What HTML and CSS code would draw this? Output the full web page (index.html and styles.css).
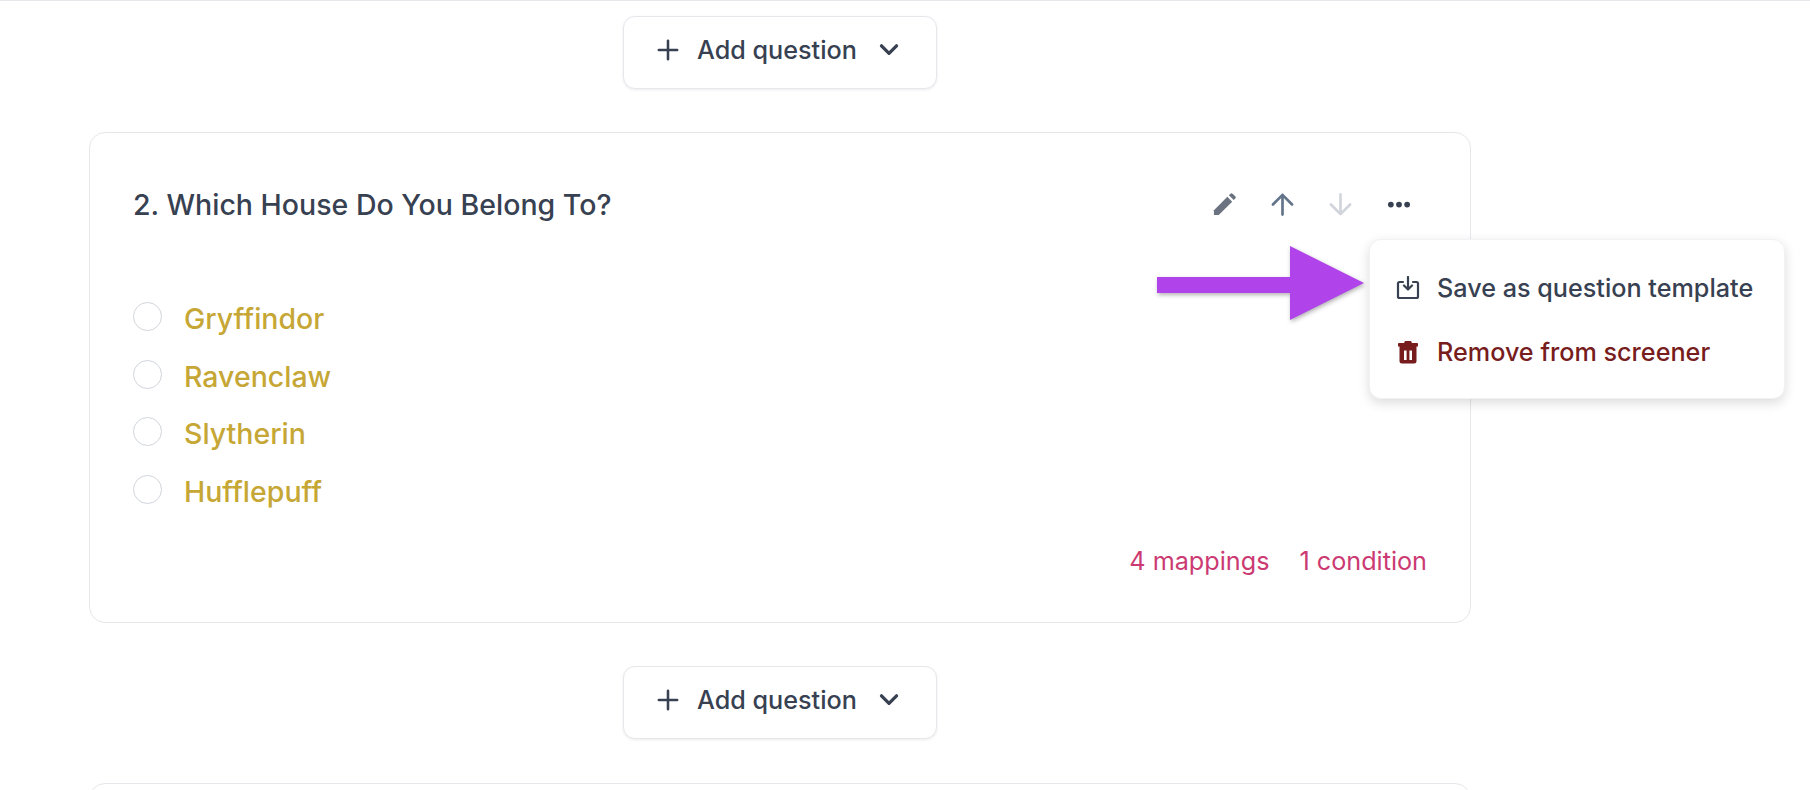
FILE: index.html
```html
<!DOCTYPE html>
<html lang="en">
<head>
  <meta charset="UTF-8" />
  <meta name="viewport" content="width=device-width, initial-scale=1.0" />
  <title>Screener questions</title>
  <link rel="stylesheet" href="styles.css">
</head>
<body>
  <main class="screener">
    <!-- Add question -->
    <div class="add-row">
      <button class="add-button">
        <svg class="add-plus" viewBox="0 0 24 24" fill="none" stroke="currentColor" stroke-width="2.8" stroke-linecap="round"><path d="M12 2v20M2 12h20"/></svg>
        <span>Add question</span>
        <svg class="add-chevron" viewBox="0 0 24 24" fill="none" stroke="currentColor" stroke-width="4" stroke-linecap="round" stroke-linejoin="round"><path d="M3 7l9 9 9-9"/></svg>
      </button>
    </div>

    <!-- Question card -->
    <section class="card">
      <header class="card-head">
        <h2>2. Which House Do You Belong To?</h2>
        <div class="card-actions">
          <svg class="icon icon-edit" viewBox="0 0 24 24" fill="currentColor"><path d="M1 23v-5L15 4l5 5L6 23z"/><path d="M16.600 2.400l1.600-1.600a1.600 1.600 0 0 1 2.300 0l2.700 2.700a1.600 1.600 0 0 1 0 2.300l-1.600 1.600z"/></svg>
          <svg class="icon icon-up" viewBox="0 0 24 24" fill="none" stroke="currentColor" stroke-width="2.800" stroke-linecap="round" stroke-linejoin="round"><path d="M12 22.500V2M2 12L12 2l10 10"/></svg>
          <svg class="icon icon-down" viewBox="0 0 24 24" fill="none" stroke="currentColor" stroke-width="2.800" stroke-linecap="round" stroke-linejoin="round"><path d="M12 1.500V22M2 12l10 10 10-10"/></svg>
          <svg class="icon icon-more" viewBox="0 0 24 24" fill="currentColor"><circle cx="3.500" cy="12" r="3"/><circle cx="12" cy="12" r="3"/><circle cx="20.500" cy="12" r="3"/></svg>
        </div>
      </header>

      <ul class="options">
        <li class="option"><span class="radio"></span>Gryffindor</li>
        <li class="option"><span class="radio"></span>Ravenclaw</li>
        <li class="option"><span class="radio"></span>Slytherin</li>
        <li class="option"><span class="radio"></span>Hufflepuff</li>
      </ul>

      <footer class="card-foot">
        <span>4 mappings</span>
        <span>1 condition</span>
      </footer>

      <!-- Dropdown menu -->
      <div class="menu">
        <div class="menu-item">
          <svg class="menu-icon" viewBox="0 0 24 24" fill="none" stroke="currentColor" stroke-width="2.200" stroke-linecap="round" stroke-linejoin="round"><path d="M7 6H3.500A1.500 1.500 0 0 0 2 7.500V20.500A1.500 1.500 0 0 0 3.500 22h17a1.500 1.500 0 0 0 1.500-1.500V7.500A1.500 1.500 0 0 0 20.500 6H17"/><path d="M12 1v12M8 9.500l4 4 4-4"/></svg>
          <span>Save as question template</span>
        </div>
        <div class="menu-item menu-danger">
          <svg class="menu-icon" viewBox="0 0 24 24" fill="currentColor"><path fill-rule="evenodd" d="M9.500 1h5a1 1 0 0 1 1 .8l.3 1.200H21a1 1 0 0 1 1 1v2.500h-1.500V21a2.500 2.500 0 0 1-2.500 2.500H6A2.500 2.500 0 0 1 3.500 21V6.500H2V4a1 1 0 0 1 1-1h5.200l.3-1.200a1 1 0 0 1 1-.8zM8 10.500V20h2.600v-9.500zM13.400 10.500V20H16v-9.500z"/></svg>
          <span>Remove from screener</span>
        </div>
      </div>
    </section>

    <div class="add-row">
      <button class="add-button">
        <svg class="add-plus" viewBox="0 0 24 24" fill="none" stroke="currentColor" stroke-width="2.8" stroke-linecap="round"><path d="M12 2v20M2 12h20"/></svg>
        <span>Add question</span>
        <svg class="add-chevron" viewBox="0 0 24 24" fill="none" stroke="currentColor" stroke-width="4" stroke-linecap="round" stroke-linejoin="round"><path d="M3 7l9 9 9-9"/></svg>
      </button>
    </div>

    <!-- Next question, only its top edge is in view -->
    <div class="next-peek">
      <section class="card"></section>
    </div>
  </main>

  <!-- Annotation arrow drawn over the page -->
  <svg class="callout" width="220" height="90" viewBox="0 0 220 90">
    <path d="M4 32H137V1L211 38 137 75V48H4z"/>
  </svg>
</body>
</html>
```

FILE: styles.css
```css
:root {
  --border-color: #e5e7eb;
  --text-color: #374151;
  --gold: #c6a736;
  --pink: #cb3a72;
  --danger: #771d1d;
}
html, body {
  height: 100%;
  overflow: hidden;
}
body {
  margin: 0;
  background-color: #fff;
  font-family: Inter, "Liberation Sans", sans-serif;
  color: var(--text-color);
  border-top: 1px solid var(--border-color);
  box-sizing: border-box;
}
.screener {
  width: 1382px;
  margin-left: 89px;
}
.add-row {
  display: flex;
  justify-content: center;
}
.add-row:first-child {
  padding: 15px 0 43px;
}
.add-button {
  display: flex;
  align-items: center;
  width: 314px;
  height: 73px;
  padding: 0 0 5px 33px;
  background-color: #fff;
  border: 1px solid var(--border-color);
  border-radius: 12px;
  box-shadow: 0 1px 3px rgba(0, 0, 0, 0.08);
  color: var(--text-color);
  font-family: inherit;
  font-size: 25.200px;
  font-weight: 500;
}
.add-plus {
  width: 22px;
  height: 22px;
  margin-right: 18px;
}
.add-chevron {
  width: 20px;
  height: 20px;
  margin-left: 22px;
}
.card {
  position: relative;
  box-sizing: border-box;
  height: 491px;
  padding: 50px 43px 0 43px;
  border: 1px solid var(--border-color);
  border-radius: 16px;
  margin-bottom: 43px;
}
.next-peek {
  height: 7px;
  margin-top: 44px;
  overflow: hidden;
}
.card-head {
  display: flex;
  align-items: center;
  justify-content: space-between;
  height: 42px;
}
.card-head h2 {
  margin: 0;
  font-size: 28.500px;
  font-weight: 500;
}
.card-actions {
  display: flex;
  align-items: center;
  gap: 35px;
  padding-right: 16px;
}
.icon {
  width: 23px;
  height: 23px;
}
.icon-edit {
  color: #6b7280;
}
.icon-up {
  color: #64748b;
}
.icon-down {
  color: #d1d5db;
}
.icon-more {
  width: 24px;
  color: #374151;
}
.options {
  list-style: none;
  margin: 65px 0 0;
  padding: 0;
}
.option {
  display: flex;
  align-items: center;
  height: 57.500px;
  color: var(--gold);
  font-size: 28.500px;
  font-weight: 500;
}
.radio {
  box-sizing: border-box;
  width: 29px;
  height: 29px;
  margin: 0 22px 4px 0;
  border: 1px solid #d1d5db;
  border-radius: 50%;
}
.card-foot {
  display: flex;
  justify-content: flex-end;
  gap: 30px;
  margin-top: 26px;
  color: var(--pink);
  font-size: 25.200px;
}
.menu {
  position: absolute;
  top: 106px;
  left: 1279px;
  box-sizing: border-box;
  width: 416px;
  height: 160px;
  padding: 16px 0;
  background-color: #fff;
  border: 1px solid #f1f2f4;
  border-radius: 12px;
  box-shadow: 0 4px 12px rgba(0, 0, 0, 0.14);
}
.menu-item {
  display: flex;
  align-items: center;
  height: 64px;
  padding-left: 26px;
  font-size: 25.200px;
  font-weight: 500;
}
.menu-icon {
  width: 24px;
  height: 24px;
  margin-right: 17px;
}
.menu-danger {
  color: var(--danger);
}
.callout {
  position: absolute;
  top: 245px;
  left: 1153px;
  overflow: visible;
  filter: drop-shadow(1px 2px 2px rgba(0, 0, 0, 0.3));
}
.callout path {
  fill: #b044ea;
}
```
